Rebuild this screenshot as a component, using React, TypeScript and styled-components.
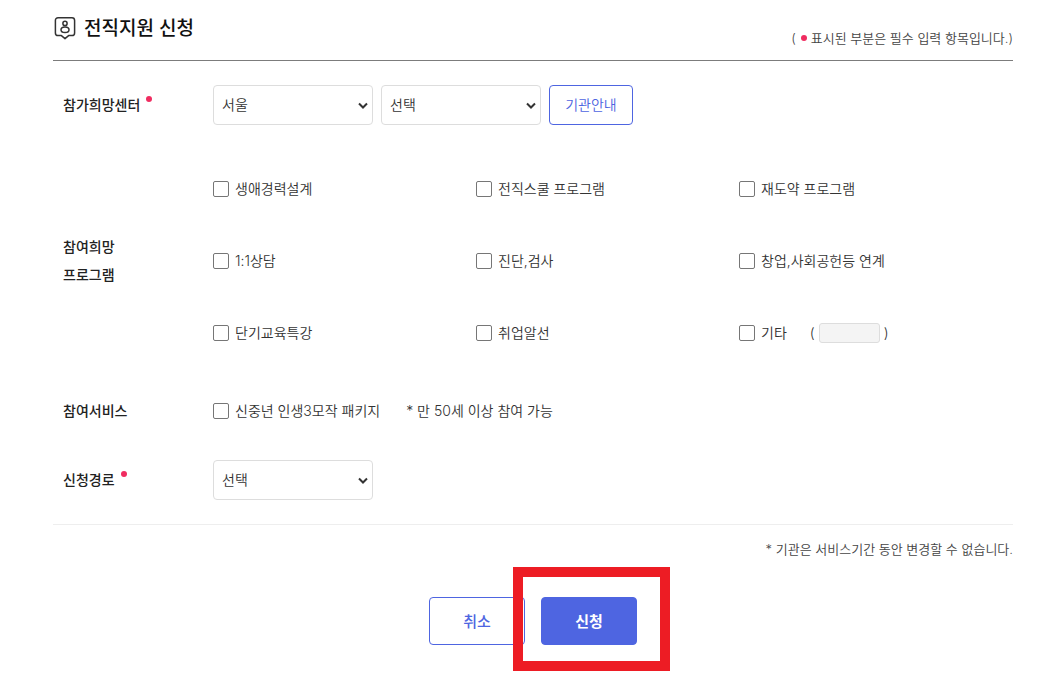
import React from "react";
import styled, { createGlobalStyle } from "styled-components";

const GlobalStyle = createGlobalStyle`
  *, *::before, *::after { box-sizing: border-box; }
  body {
    margin: 0;
    background: #fff;
    color: #333;
    font-family: Inter, "Noto Sans CJK KR", sans-serif;
    font-size: 14px;
    font-weight: 350;
    line-height: 20px;
  }
  button, input, select { font: inherit; color: inherit; }
`;

const Page = styled.main`
  padding: 0 39px 28px 53px;
`;

const Header = styled.header`
  display: flex;
  justify-content: space-between;
  align-items: flex-end;
  height: 61px;
  padding-bottom: 12px;
  border-bottom: 1px solid #7c7c7c;
`;

const Title = styled.h1`
  display: flex;
  align-items: center;
  gap: 8px;
  margin: 0 0 4px 1px;
  color: #111;
  font-size: 19px;
  line-height: 32px;
  font-weight: 500;

  svg { margin-bottom: 2px; }
`;

const TitleText = styled.span`
  padding-top: 1px;
  line-height: 30px;
`;

const Note = styled.p<{ $end?: boolean }>`
  margin: 0;
  color: #444;
  font-size: 13px;
  line-height: 20px;
  text-align: ${(p) => (p.$end ? "right" : "left")};
  padding-top: ${(p) => (p.$end ? "14px" : "0")};
`;

const Dot = styled.i`
  display: inline-block;
  width: 6px;
  height: 6px;
  margin: 0 4px 2px 5px;
  border-radius: 50%;
  background: #f02c60;
`;

const LabelDot = styled(Dot)`
  margin: 0 0 8px 6px;
`;

const Form = styled.form`
  margin: 0;
`;

const Rows = styled.div`
  border-bottom: 1px solid #eee;
`;

const Row = styled.div<{ $pad: string }>`
  display: grid;
  grid-template-columns: 150px 1fr;
  align-items: center;
  padding: ${(p) => p.$pad};
  padding-left: 10px;
`;

const RowLabel = styled.div`
  color: #222;
  line-height: 28px;
  font-weight: 500;
`;

const Controls = styled.div`
  display: flex;
  align-items: center;
  gap: 8px;
`;

const SelectBox = styled.span`
  position: relative;
  display: block;
  width: 160px;

  svg {
    position: absolute;
    right: 5px;
    top: 17px;
    pointer-events: none;
  }
`;

const Select = styled.select`
  appearance: none;
  display: block;
  width: 100%;
  height: 40px;
  padding: 0 24px 0 8px;
  border: 1px solid #ddd;
  border-radius: 4px;
  background: #fff;
`;

const Button = styled.button<{ $size: "small" | "large"; $filled?: boolean }>`
  width: ${(p) => (p.$size === "small" ? "84px" : "96px")};
  height: ${(p) => (p.$size === "small" ? "40px" : "48px")};
  padding: ${(p) => (p.$size === "small" ? "0" : "2px 0 0")};
  border: 1px solid #4e65e1;
  border-radius: 4px;
  background: ${(p) => (p.$filled ? "#4e65e1" : "#fff")};
  color: ${(p) => (p.$filled ? "#fff" : "#4e65e1")};
  font-size: ${(p) => (p.$size === "small" ? "14px" : "15px")};
  font-weight: ${(p) => (p.$filled ? 700 : p.$size === "large" ? 500 : 350)};
  cursor: pointer;
`;

const Programs = styled.div`
  display: grid;
  grid-template-columns: repeat(3, 1fr);
  grid-auto-rows: 72px;
  align-items: center;
  padding-right: 11px;
`;

const Option = styled.div`
  display: flex;
  align-items: center;
`;

const CheckLabel = styled.label`
  display: flex;
  align-items: center;
  gap: 6px;
  white-space: nowrap;
`;

const Checkbox = styled.input`
  appearance: none;
  width: 16px;
  height: 16px;
  margin: 0;
  border: 1px solid #767676;
  border-radius: 2px;
  background: #fff;

  &:checked { background: #4e65e1; border-color: #4e65e1; }
`;

const Etc = styled.span`
  display: flex;
  align-items: center;
  gap: 4px;
  margin-left: 23px;
`;

const EtcInput = styled.input`
  width: 61px;
  height: 20px;
  padding: 0 4px;
  border: 1px solid #ddd;
  border-radius: 3px;
  background: #f4f4f4;
`;

const Aside = styled.span`
  margin-left: 26px;
`;

const Actions = styled.div`
  display: flex;
  justify-content: center;
  gap: 16px;
  padding-top: 38px;
`;

const Highlight = styled.div`
  position: relative;

  &::after {
    content: "";
    position: absolute;
    inset: -30px -33px -26px -28px;
    border: 10px solid #ed1c24;
    pointer-events: none;
  }
`;

const BadgeIcon = () => (
  <svg width="22" height="24" viewBox="0 0 22 24" fill="none" stroke="#333" strokeWidth="1.5" strokeLinejoin="round" aria-hidden="true">
    <path d="M4 1.800h14a2.600 2.600 0 0 1 2.600 2.600v12.600a2.600 2.600 0 0 1-2.600 2.600h-3.400L11 22.600l-3.600-3H4a2.600 2.600 0 0 1-2.600-2.600V4.400a2.600 2.600 0 0 1 2.600-2.600z" />
    <circle cx="11" cy="7.400" r="2.100" />
    <ellipse cx="11" cy="13.700" rx="4" ry="2.800" />
  </svg>
);

const Chevron = () => (
  <svg width="10" height="8" viewBox="0 0 10 8" fill="none" stroke="#333" strokeWidth="2" aria-hidden="true">
    <path d="M1 1.500l4 4 4-4" />
  </svg>
);

const Dropdown = ({ label, options }: { label: string; options: string[] }) => (
  <SelectBox>
    <Select aria-label={label}>
      {options.map((o) => (
        <option key={o}>{o}</option>
      ))}
    </Select>
    <Chevron />
  </SelectBox>
);

const Check = ({ children }: { children: React.ReactNode }) => (
  <CheckLabel>
    <Checkbox type="checkbox" />
    <span>{children}</span>
  </CheckLabel>
);

const programs = [
  "생애경력설계",
  "전직스쿨 프로그램",
  "재도약 프로그램",
  "1:1상담",
  "진단,검사",
  "창업,사회공헌등 연계",
  "단기교육특강",
  "취업알선",
];

export default function App() {
  return (
    <>
      <GlobalStyle />
      <Page>
        <Header>
          <Title>
            <BadgeIcon />
            <TitleText>전직지원 신청</TitleText>
          </Title>
          <Note>
            (<Dot />
            표시된 부분은 필수 입력 항목입니다.)
          </Note>
        </Header>
        <Form onSubmit={(e) => e.preventDefault()}>
          <Rows>
            <Row $pad="24px 0">
              <RowLabel>
                참가희망센터
                <LabelDot />
              </RowLabel>
              <Controls>
                <Dropdown label="참가희망센터" options={["서울"]} />
                <Dropdown label="참가희망센터" options={["선택"]} />
                <Button type="button" $size="small">기관안내</Button>
              </Controls>
            </Row>
            <Row $pad="4px 0 18px">
              <RowLabel>
                참여희망
                <br />
                프로그램
              </RowLabel>
              <Programs>
                {programs.map((name) => (
                  <Option key={name}>
                    <Check>{name}</Check>
                  </Option>
                ))}
                <Option>
                  <Check>기타</Check>
                  <Etc>
                    (
                    <EtcInput type="text" aria-label="기타" disabled />
                    )
                  </Etc>
                </Option>
              </Programs>
            </Row>
            <Row $pad="10px 0 11px">
              <RowLabel>참여서비스</RowLabel>
              <Option>
                <Check>신중년 인생3모작 패키지</Check>
                <Aside>* 만 50세 이상 참여 가능</Aside>
              </Option>
            </Row>
            <Row $pad="24px 0">
              <RowLabel>
                신청경로
                <LabelDot />
              </RowLabel>
              <Controls>
                <Dropdown label="신청경로" options={["선택"]} />
              </Controls>
            </Row>
          </Rows>
          <Note $end>* 기관은 서비스기간 동안 변경할 수 없습니다.</Note>
          <Actions>
            <Button type="button" $size="large">취소</Button>
            <Highlight>
              <Button type="submit" $size="large" $filled>신청</Button>
            </Highlight>
          </Actions>
        </Form>
      </Page>
    </>
  );
}
